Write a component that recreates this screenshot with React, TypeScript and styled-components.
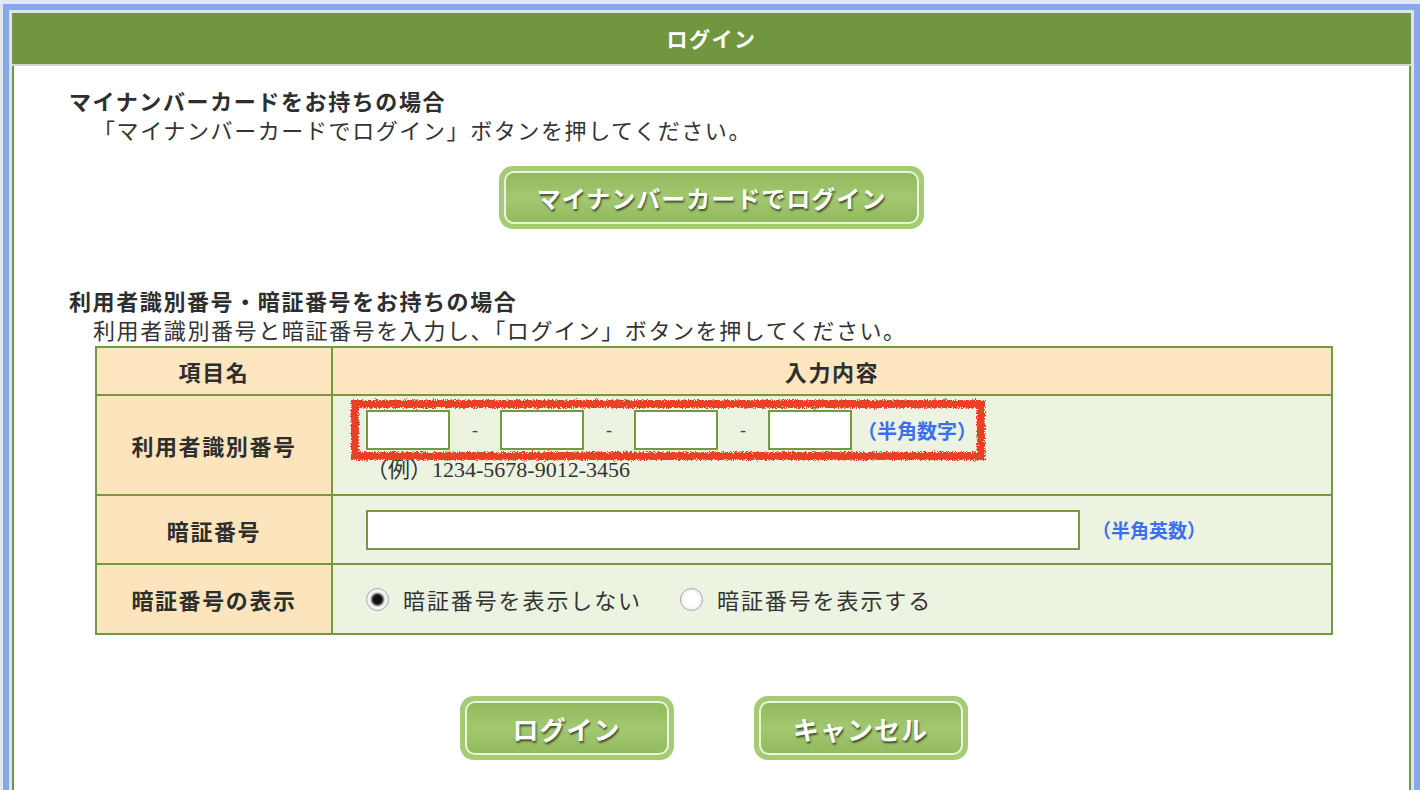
import React from "react";
import styled, { createGlobalStyle } from "styled-components";

const GlobalStyle = createGlobalStyle`
  html, body {
    margin: 0;
    padding: 0;
    background: #e3e8ee;
    overflow: hidden;
  }
  body {
    font-family: "Liberation Serif", "Noto Sans CJK JP", serif;
    color: #333;
  }
`;

const App = () => (
  <>
    <GlobalStyle />
    <FilterDefs aria-hidden="true">
      <filter id="crayon" x="-5%" y="-30%" width="110%" height="160%">
        <feTurbulence type="fractalNoise" baseFrequency="1.1" numOctaves="3" result="noise" />
        <feDisplacementMap in="SourceGraphic" in2="noise" scale="6" xChannelSelector="R" yChannelSelector="G" />
      </filter>
    </FilterDefs>
    <Frame>
      <Dialog>
        <Header>ログイン</Header>
        <Content>
          <Heading>マイナンバーカードをお持ちの場合</Heading>
          <Sub>「マイナンバーカードでログイン」ボタンを押してください。</Sub>
          <CardButton type="button" $w={425} $h={63}>
            <ButtonFace $size={24}>マイナンバーカードでログイン</ButtonFace>
          </CardButton>

          <Heading $gap={59}>利用者識別番号・暗証番号をお持ちの場合</Heading>
          <Sub>利用者識別番号と暗証番号を入力し、「ログイン」ボタンを押してください。</Sub>

          <FormTable>
            <HeadCell>項目名</HeadCell>
            <HeadCell>入力内容</HeadCell>

            <LabelCell>利用者識別番号</LabelCell>
            <InputCell $column>
              <InputGroup>
                <RedMark />
                <TextBox $w={84} />
                <Dash>-</Dash>
                <TextBox $w={84} />
                <Dash>-</Dash>
                <TextBox $w={84} />
                <Dash>-</Dash>
                <TextBox $w={84} />
                <Note $size={20}>（半角数字）</Note>
              </InputGroup>
              <Example>（例）1234-5678-9012-3456</Example>
            </InputCell>

            <LabelCell>暗証番号</LabelCell>
            <InputCell>
              <TextBox $w={714} type="password" />
              <Note $gap={12} $size={19}>（半角英数）</Note>
            </InputCell>

            <LabelCell>暗証番号の表示</LabelCell>
            <InputCell>
              <RadioRow>
                <RadioLabel>
                  <Radio type="radio" name="show" defaultChecked />
                  暗証番号を表示しない
                </RadioLabel>
                <RadioLabel>
                  <Radio type="radio" name="show" />
                  暗証番号を表示する
                </RadioLabel>
              </RadioRow>
            </InputCell>
          </FormTable>

          <ButtonRow>
            <CardButton type="button" $w={214} $h={64}>
              <ButtonFace $size={26}>ログイン</ButtonFace>
            </CardButton>
            <CardButton type="button" $w={214} $h={64}>
              <ButtonFace $size={26}>キャンセル</ButtonFace>
            </CardButton>
          </ButtonRow>
        </Content>
      </Dialog>
    </Frame>
  </>
);

const FilterDefs = styled.svg`
  position: absolute;
  width: 0;
  height: 0;
`;

const Frame = styled.div`
  margin: 4px 0 0 3px;
  height: calc(100vh - 4px);
  box-sizing: border-box;
  border: 6px solid #88a8ec;
  border-bottom: none;
  padding: 3px 3px 0;
  background: #dde4ec;
`;

const Dialog = styled.div`
  height: 100%;
  box-sizing: border-box;
  background: #fff;
  border: 2px solid #74973f;
  border-top: none;
  border-bottom: none;
`;

const Header = styled.div`
  height: 51px;
  line-height: 51px;
  margin: 0 -2px;
  background: #72963f;
  border-bottom: 2px solid #d4d4d4;
  color: #fff;
  text-align: center;
  font-family: "Noto Sans CJK JP", sans-serif;
  font-size: 21px;
  font-weight: 700;
  letter-spacing: 1.5px;
`;

const Content = styled.div`
  padding: 22px 55px 0;
  display: flex;
  flex-direction: column;
`;

const Heading = styled.h2<{ $gap?: number }>`
  margin: ${(p) => p.$gap ?? 0}px 0 0;
  font-size: 22px;
  line-height: 29px;
  letter-spacing: 1.6px;
  font-weight: 700;
  color: #2e2e2e;
`;

const Sub = styled.p`
  margin: 0;
  padding-left: 24px;
  font-size: 22px;
  line-height: 29px;
  letter-spacing: 1.6px;
  color: #333;
`;

const CardButton = styled.button<{ $w: number; $h: number }>`
  width: ${(p) => p.$w}px;
  height: ${(p) => p.$h}px;
  margin: 20px auto 0;
  padding: 5px;
  box-sizing: border-box;
  border: none;
  border-radius: 14px;
  background: #a5cb75;
  cursor: pointer;
  display: flex;
`;

const ButtonFace = styled.span<{ $size: number }>`
  flex: 1;
  display: flex;
  align-items: center;
  justify-content: center;
  border: 2px solid rgba(238, 247, 226, 0.95);
  border-radius: 10px;
  background: linear-gradient(#92b95c, #a3c871 50%, #93ba5e);
  color: #fff;
  font-family: "Noto Sans CJK JP", sans-serif;
  font-size: ${(p) => p.$size}px;
  font-weight: 700;
  letter-spacing: 1px;
  text-shadow: 1px 2px 2px rgba(30, 40, 20, 0.75);
`;

const FormTable = styled.div`
  margin-left: 26px;
  width: 1238px;
  box-sizing: border-box;
  display: grid;
  grid-template-columns: 234px 1fr;
  grid-template-rows: 46px 98px 67px 68px;
  gap: 2px;
  border: 2px solid #76993f;
  background: #76993f;
`;

const HeadCell = styled.div`
  background: #fde6bf;
  display: flex;
  align-items: center;
  justify-content: center;
  font-size: 22px;
  letter-spacing: 1.6px;
  font-weight: 700;
  color: #2e2e2e;
`;

const LabelCell = styled(HeadCell)`
  background: #fce5bd;
`;

const InputCell = styled.div<{ $column?: boolean }>`
  background: #ecf3e0;
  display: flex;
  flex-direction: ${(p) => (p.$column ? "column" : "row")};
  align-items: ${(p) => (p.$column ? "flex-start" : "center")};
  padding: ${(p) => (p.$column ? "14px 0 0 33px" : "0 0 0 33px")};
`;

const InputGroup = styled.div`
  position: relative;
  display: flex;
  align-items: center;
`;

const RedMark = styled.div`
  position: absolute;
  top: -10px;
  left: -15px;
  right: -8px;
  bottom: -10px;
  border: 8px solid #ea4127;
  filter: url(#crayon);
  pointer-events: none;
`;

const TextBox = styled.input<{ $w: number }>`
  width: ${(p) => p.$w}px;
  height: 40px;
  box-sizing: border-box;
  margin: 0;
  padding: 0 6px;
  border: 2px solid #76993f;
  background: #fff;
  outline: none;
  font-size: 18px;
`;

const Dash = styled.span`
  width: 50px;
  text-align: center;
  font-size: 18px;
  color: #444;
`;

const Note = styled.span<{ $gap?: number; $size: number }>`
  margin-left: ${(p) => p.$gap ?? 5}px;
  font-family: "Noto Sans CJK JP", sans-serif;
  font-size: ${(p) => p.$size}px;
  font-weight: 700;
  color: #3c6ff0;
`;

const Example = styled.div`
  margin-top: 5px;
  font-size: 22px;
  line-height: 29px;
  color: #333;
`;

const RadioRow = styled.div`
  display: flex;
  align-items: center;
  gap: 38px;
`;

const RadioLabel = styled.label`
  display: inline-flex;
  align-items: center;
  gap: 14px;
  font-size: 22px;
  letter-spacing: 1.9px;
  color: #333;
  cursor: pointer;
`;

const Radio = styled.input`
  appearance: none;
  width: 23px;
  height: 23px;
  margin: 0;
  border-radius: 50%;
  border: 1px solid #a8a8a8;
  background: radial-gradient(circle, #fff 55%, #e2e2e2 100%);
  box-shadow: inset 0 0 0 2px #f2f2f2;

  &:checked {
    background: radial-gradient(circle, #111 0 4px, #555 5.5px, #d8d8d8 7px, #fff 8.5px, #e2e2e2 100%);
  }
`;

const ButtonRow = styled.div`
  display: flex;
  justify-content: center;
  gap: 80px;
  margin-top: 41px;
  padding-left: 4px;

  & > button {
    margin: 20px 0 0;
  }
`;

export default App;
